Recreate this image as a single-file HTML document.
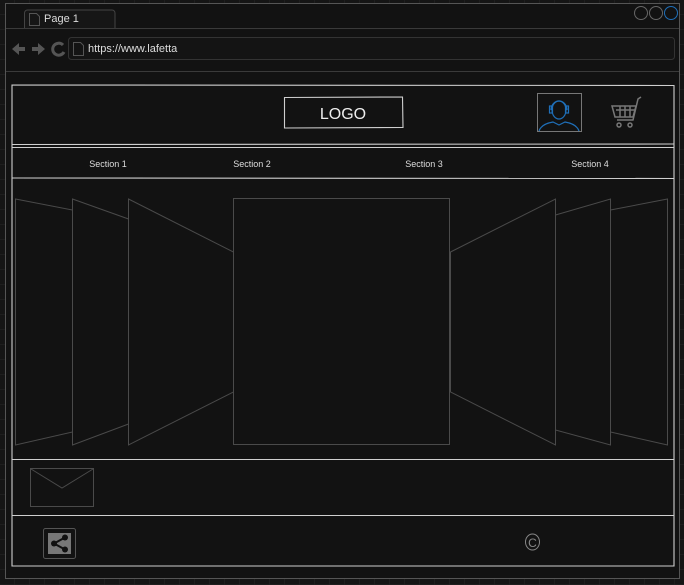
<!DOCTYPE html>
<html><head><meta charset="utf-8"><style>
html,body{margin:0;padding:0;background:#151515;width:684px;height:585px;overflow:hidden}
svg{display:block}
text{font-family:"Liberation Sans",sans-serif}
</style></head><body>
<svg width="684" height="585" viewBox="0 0 684 585">
<defs><pattern id="g" width="15" height="15" patternUnits="userSpaceOnUse"><path d="M15 0V15H0" fill="none" stroke="#262626" stroke-width="1"/></pattern></defs>
<rect width="684" height="585" fill="#151515"/>
<rect width="684" height="585" fill="url(#g)"/>
<rect x="5.5" y="3.5" width="674" height="575" fill="#121212" stroke="#555"/>
<line x1="6" y1="28.5" x2="679" y2="28.5" stroke="#3a3a3a"/>
<line x1="6" y1="71.5" x2="679" y2="71.5" stroke="#3a3a3a"/>
<path d="M24.5 28V13a3 3 0 0 1 3-3H112a3 3 0 0 1 3 3V28" fill="#161616" stroke="#444"/>
<path d="M29.5 13.5h7l3 3v9h-10z" fill="none" stroke="#555"/>
<text x="44" y="22" font-size="11" fill="#ddd">Page 1</text>
<circle cx="641" cy="13" r="6.5" fill="none" stroke="#666"/>
<circle cx="656" cy="13" r="6.5" fill="none" stroke="#666"/>
<circle cx="671" cy="13" r="6.5" fill="none" stroke="#1f6fb8"/>
<path d="M12 49l7-6v4h6v4h-6v4z" fill="#555"/>
<path d="M45 49l-7-6v4h-6v4h6v4z" fill="#555"/>
<path d="M63 45a6 6 0 1 0 1 7" fill="none" stroke="#555" stroke-width="3"/>
<rect x="68.5" y="37.5" width="606" height="22" rx="3" fill="#141414" stroke="#333"/>
<path d="M73.5 42.5h7l3 3v10h-10z" fill="none" stroke="#555"/>
<text x="88" y="52" font-size="11" fill="#ddd">https://www.lafetta</text>
<g fill="none" stroke="#cfcfcf" stroke-width="1.1">
<path d="M12 85 L674 85.5 V566 H12 Z"/>
<path d="M12 144.5 L674 144"/>
<path d="M12 147.5 L674 147.5"/>
<path d="M12 178 L674 178.5"/>
<path d="M12 459.5 L674 459.5"/>
<path d="M12 515.5 L674 515.5"/>
<path d="M284.5 97.5 L402.5 97 L403 127.5 L284.5 128 Z"/>
</g>
<text x="343" y="119" font-size="16" fill="#eee" text-anchor="middle">LOGO</text>
<g font-size="9" fill="#ddd" text-anchor="middle">
<text x="108" y="167">Section 1</text><text x="252" y="167">Section 2</text>
<text x="424" y="167">Section 3</text><text x="590" y="167">Section 4</text></g>
<rect x="537.5" y="93.5" width="44" height="38" fill="none" stroke="#777"/>
<g fill="none" stroke="#1f6fb8" stroke-width="1.2">
<ellipse cx="559" cy="110" rx="7" ry="9"/>
<path d="M551 110a8 9 0 0 1 16 0"/>
<rect x="549.5" y="106" width="3" height="7"/><rect x="565.5" y="106" width="3" height="7"/>
<path d="M539 131c2-6 8-8 14-9l6 3 6-3c6 1 12 3 14 9"/>
</g>
<g fill="none" stroke="#777" stroke-width="1.5">
<path d="M612 106h24l-3 11h-18zM641 97l-3 2-5 21h-16"/>
<path d="M616 110h19M620 106v11M625 106v11M630 106v11"/>
<circle cx="619" cy="125" r="2"/><circle cx="630" cy="125" r="2"/>
</g>
<g fill="none" stroke="#4a4a4a">
<path d="M15.5 199l57 11v222l-57 13z"/>
<path d="M72.5 199l56 20v205l-56 21z"/>
<path d="M128.5 199l105 53v140l-105 53z"/>
<rect x="233.5" y="198.5" width="216" height="246"/>
<path d="M450.5 252l105-53v246l-105-53z"/>
<path d="M555.5 215l55-16v246l-55-15z"/>
<path d="M610.5 210l57-11v246l-57-13z"/>
<rect x="30.5" y="468.5" width="63" height="38"/>
<path d="M31 469l31 19 31-19"/>
</g>
<rect x="43.5" y="528.5" width="32" height="30" rx="2" fill="none" stroke="#555"/>
<rect x="48" y="533" width="23" height="21" fill="#777"/>
<g fill="#111"><circle cx="65" cy="537.5" r="3"/><circle cx="54" cy="543.5" r="3"/><circle cx="65" cy="549.5" r="3"/></g>
<path d="M65 537.5L54 543.5L65 549.5" stroke="#111" stroke-width="2" fill="none"/>
<ellipse cx="532.5" cy="542" rx="7" ry="8" fill="none" stroke="#888"/>
<text x="532.5" y="547" font-size="12" fill="#888" text-anchor="middle">C</text>
</svg>
</body></html>
